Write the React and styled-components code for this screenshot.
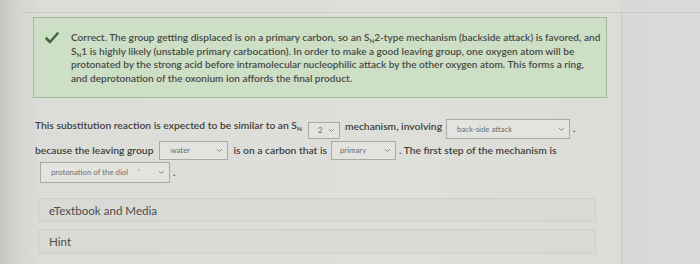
import React from "react";
import styled, { createGlobalStyle } from "styled-components";

const Global = createGlobalStyle`
  html, body { margin: 0; padding: 0; }
  body {
    width: 700px; height: 264px; overflow: hidden;
    font-family: Lato, "Open Sans", sans-serif;
    background: #d6d6d2;
  }
`;

const Page = styled.div`
  display: flex;
  width: 700px;
  height: 264px;
  background: linear-gradient(90deg, #c4c4c0 0px, #d4d4d0 18px, #dcdcd8 40px, #dedfdb 400px, #dcdcd9 620px, #d8d8d6 621px, #dadad8 700px);
`;

const Gutter = styled.div`
  width: 20px;
  flex: none;
`;

const Main = styled.div`
  width: 602px;
  flex: none;
  border-top: 1px solid #cacac6;
  margin-top: 12px;
  border-right: 1px solid #c8c8c4;
  box-sizing: border-box;
  padding-top: 4px;
`;

const Side = styled.div`
  flex: 1;
  border-top: 1px solid #cacac6;
  margin-top: 12px;
`;

const Feedback = styled.div`
  display: flex;
  margin-left: 13px;
  width: 574px;
  height: 81px;
  box-sizing: border-box;
  background: #cddfc4;
  border: 1px solid #a3b89c;
  padding: 13px 5px 0 11px;
  gap: 12px;
`;

const Check = styled.svg`
  flex: none;
  width: 14px;
  height: 12px;
  margin-top: 1px;
`;

const FeedbackText = styled.p`
  margin: 0;
  font-size: 10.1px;
  line-height: 13.5px;
  color: #4a4a48;
  font-weight: 600;
`;

const Sub = styled.span`
  font-size: 0.62em;
  line-height: 1;
  vertical-align: -0.3em;
`;

const Question = styled.div`
  margin: 19px 0 0 15px;
  display: flex;
  flex-direction: column;
  gap: 1px;
`;

const Row = styled.div`
  display: flex;
  align-items: center;
  height: ${p => p.$h}px;
  font-size: 10.3px;
  color: #3f3f3d;
  font-weight: 600;
  white-space: nowrap;
`;

const Text = styled.span`
  margin-right: ${p => p.$mr || 0}px;
  margin-left: ${p => p.$ml || 0}px;
  margin-top: ${p => p.$mt || 0}px;
`;

const Select = styled.span`
  display: inline-flex;
  align-items: center;
  justify-content: space-between;
  box-sizing: border-box;
  flex: none;
  width: ${p => p.$w}px;
  height: ${p => p.$h}px;
  margin-top: ${p => p.$mt || 0}px;
  margin-left: ${p => p.$ml || 0}px;
  background: #e3e3e0;
  border: 1px solid #a9a9a6;
  padding: 0 4px 0 ${p => p.$pl || 10}px;
  font-size: 7.8px;
  font-weight: 400;
  color: #6f6f6c;
`;

const Chevron = () => (
  <svg width="7" height="5" viewBox="0 0 7 5">
    <path d="M1 1 L3.5 3.5 L6 1" fill="none" stroke="#8c8c8a" strokeWidth="1" />
  </svg>
);

const Panels = styled.div`
  margin: 15px 0 0 18px;
  display: flex;
  flex-direction: column;
  gap: 7px;
  width: 558px;
`;

const Panel = styled.div`
  height: ${p => p.$h}px;
  box-sizing: border-box;
  background: #d9d9d6;
  border: 1px solid #cfcfcc;
  border-radius: 2px;
  display: flex;
  align-items: center;
  padding-left: 10px;
  font-size: 11.6px;
  color: #4d4d4b;
`;

export default function App() {
  return (
    <>
      <Global />
      <Page>
        <Gutter />
        <Main>
          <Feedback>
            <Check viewBox="0 0 14 12">
              <path d="M1.5 6.5 L5 10 L12.5 1.5" fill="none" stroke="#3f6a3d" strokeWidth="2.6" strokeLinecap="round" strokeLinejoin="round" />
            </Check>
            <FeedbackText>
              Correct. The group getting displaced is on a primary carbon, so an S<Sub>N</Sub>2-type mechanism (backside attack) is favored, and S<Sub>N</Sub>1 is highly likely (unstable primary carbocation). In order to make a good leaving group, one oxygen atom will be protonated by the strong acid before intramolecular nucleophilic attack by the other oxygen atom. This forms a ring, and deprotonation of the oxonium ion affords the final product.
            </FeedbackText>
          </Feedback>
          <Question>
            <Row $h={22}>
              <Text $mr={6} $mt={-4}>This substitution reaction is expected to be similar to an S<Sub>N</Sub></Text>
              <Select $w={32} $h={17} $pl={9} $mt={4}>2<Chevron /></Select>
              <Text $ml={5} $mr={4} $mt={-4}>mechanism, involving</Text>
              <Select $w={124} $h={20} $pl={10} $mt={2}>back-side attack<Chevron /></Select>
              <Text $ml={3}>.</Text>
            </Row>
            <Row $h={20}>
              <Text $mr={6}>because the leaving group</Text>
              <Select $w={69} $h={19} $pl={10}>water<Chevron /></Select>
              <Text $ml={5} $mr={4}>is on a carbon that is</Text>
              <Select $w={65} $h={19} $pl={8}>primary<Chevron /></Select>
              <Text $ml={3}>. The first step of the mechanism is</Text>
            </Row>
            <Row $h={22}>
              <Select $w={130} $h={21} $pl={10} $ml={5}>protonation of the diol&nbsp;&nbsp;&nbsp;&nbsp;&nbsp;'<Chevron /></Select>
              <Text $ml={3}>.</Text>
            </Row>
          </Question>
          <Panels>
            <Panel $h={24}>eTextbook and Media</Panel>
            <Panel $h={25}>Hint</Panel>
          </Panels>
        </Main>
        <Side />
      </Page>
    </>
  );
}
